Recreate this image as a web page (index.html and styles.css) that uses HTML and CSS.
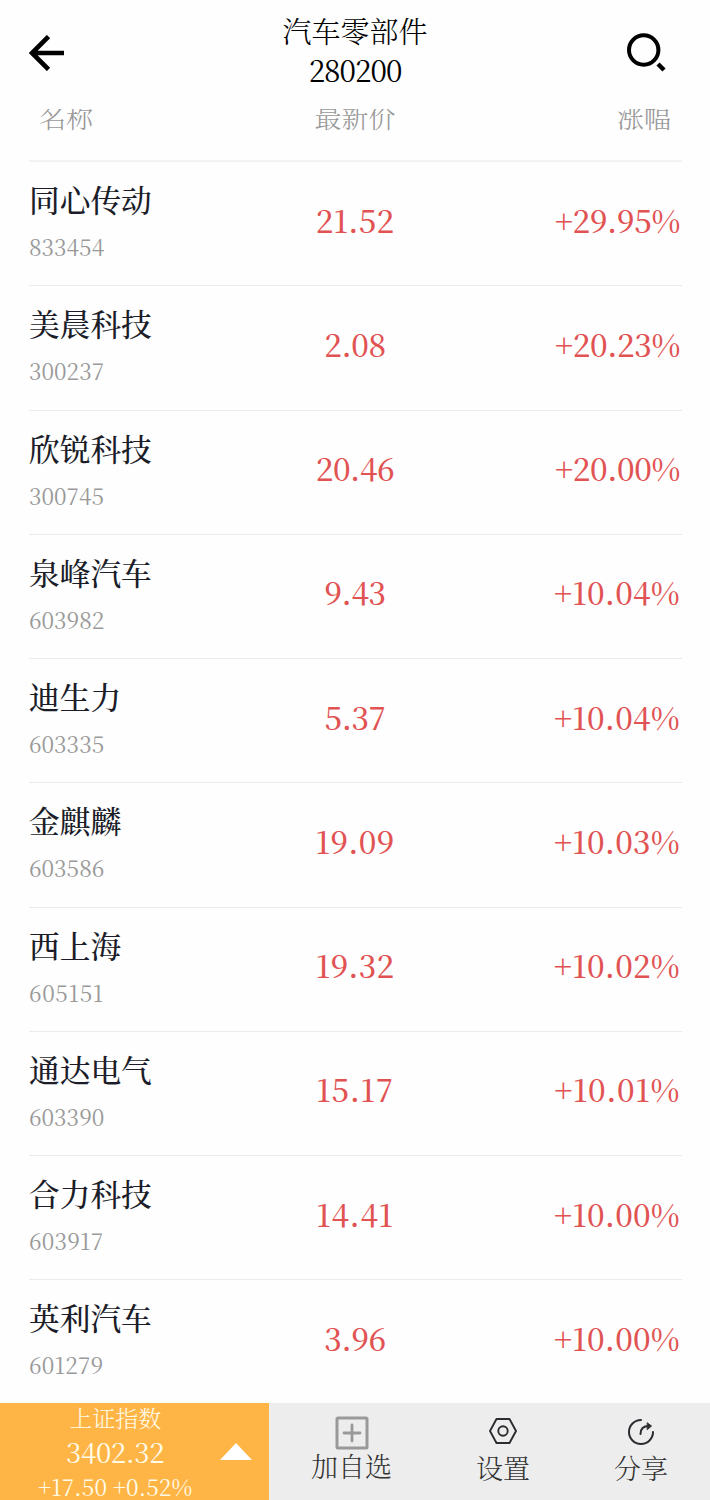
FILE: index.html
```html
<!DOCTYPE html>
<html lang="zh-CN">
<head>
    <meta charset="UTF-8">
    <meta name="viewport" content="width=device-width, initial-scale=1.0">
    <title>汽车零部件</title>
    <link rel="stylesheet" href="styles.css">
</head>
<body>
    <header class="header">
        <svg class="back" width="36" height="36" viewBox="0 0 36 36">
            <path d="M19.500 1.500L3 18l16.500 16.500M3 18h32" fill="none" stroke="#000" stroke-width="4.600"/>
        </svg>
        <div class="title">
            <h1>汽车零部件</h1>
            <p>280200</p>
        </div>
        <svg class="search" width="40" height="40" viewBox="0 0 40 40">
            <circle cx="17.700" cy="18" r="14.700" fill="none" stroke="#000" stroke-width="4"/>
            <path d="M32 32l6 6" stroke="#000" stroke-width="4.400"/>
        </svg>
    </header>

    <main>
        <div class="list-head">
            <span>名称</span>
            <span>最新价</span>
            <span>涨幅</span>
        </div>
        <ul class="list">
            <li><div class="name"><b>同心传动</b><small>833454</small></div><span class="price wide">21.52</span><span class="rate">+29.95%</span></li>
            <li><div class="name"><b>美晨科技</b><small>300237</small></div><span class="price">2.08</span><span class="rate">+20.23%</span></li>
            <li><div class="name"><b>欣锐科技</b><small>300745</small></div><span class="price">20.46</span><span class="rate">+20.00%</span></li>
            <li><div class="name"><b>泉峰汽车</b><small>603982</small></div><span class="price">9.43</span><span class="rate wide">+10.04%</span></li>
            <li><div class="name"><b>迪生力</b><small>603335</small></div><span class="price">5.37</span><span class="rate wide">+10.04%</span></li>
            <li><div class="name"><b>金麒麟</b><small>603586</small></div><span class="price wide">19.09</span><span class="rate wide">+10.03%</span></li>
            <li><div class="name"><b>西上海</b><small class="wider">605151</small></div><span class="price wide">19.32</span><span class="rate wide">+10.02%</span></li>
            <li><div class="name"><b>通达电气</b><small>603390</small></div><span class="price wider">15.17</span><span class="rate wider">+10.01%</span></li>
            <li><div class="name"><b>合力科技</b><small class="wide">603917</small></div><span class="price wider">14.41</span><span class="rate wide">+10.00%</span></li>
            <li><div class="name"><b>英利汽车</b><small class="wide">601279</small></div><span class="price">3.96</span><span class="rate wide">+10.00%</span></li>
        </ul>
    </main>

    <footer class="footer">
        <div class="index">
            <div class="index-text">
                <span class="index-name">上证指数</span>
                <span class="index-value">3402.32</span>
                <span class="index-change">+17.50 +0.52%</span>
            </div>
            <svg width="32" height="17" viewBox="0 0 32 17"><path d="M16 0l16 17H0z" fill="#fff"/></svg>
        </div>
        <div class="tab tab-add">
            <svg width="34" height="34" viewBox="0 0 34 34" fill="none" stroke="#999">
                <rect x="2" y="2" width="30" height="30" rx="1" stroke-width="3"/>
                <path d="M17 9v16M9 17h16" stroke-width="2.800" stroke-linecap="round"/>
            </svg>
            <span>加自选</span>
        </div>
        <div class="tab tab-set">
            <svg width="28" height="28" viewBox="0 0 28 28" fill="none" stroke="#2b2b30" stroke-width="1.900" stroke-linejoin="round">
                <path d="M7.500 2h13L27 14l-6.500 12h-13L1 14z"/>
                <circle cx="14" cy="14" r="4.700"/>
            </svg>
            <span>设置</span>
        </div>
        <div class="tab tab-share">
            <svg width="28" height="28" viewBox="0 0 28 28" fill="none" stroke="#2b2b30" stroke-width="2" stroke-linecap="round">
                <path d="M14 2A12 12 0 1 0 26 14"/>
                <path d="M13.500 16c0-5 3-8 8.500-8"/>
                <path d="M20.500 5l4 3-4 3.500z" fill="#2b2b30" stroke-width="1" stroke-linejoin="round"/>
            </svg>
            <span>分享</span>
        </div>
    </footer>
</body>
</html>
```
FILE: styles.css
```css
* {
    box-sizing: border-box;
    margin: 0;
    padding: 0;
}

body {
    height: 1500px;
    overflow: hidden;
    display: flex;
    flex-direction: column;
    background-color: #fefefe;
    color: #000;
    font-family: "Noto Serif CJK SC", "Liberation Serif", "Noto Sans CJK SC", serif;
    font-kerning: none;
}

/* Top bar */
.header {
    height: 109px;
    flex: none;
    display: grid;
    grid-template-columns: 40px 1fr 40px;
    align-items: start;
    padding: 11px 44px 0 29px;
}

.back {
    margin-top: 24px;
}

.search {
    margin-top: 21px;
}

.title {
    padding-left: 15px;
    text-align: center;
    line-height: 40px;
}

.title h1 {
    font-size: 29px;
    font-weight: 300;
}

.title p {
    margin-top: -2px;
    font-size: 29.500px;
    letter-spacing: -1px;
}

/* Column names, partly scrolled under the top bar */
.list-head {
    height: 53px;
    margin: 0 28px 0 29px;
    padding: 0 11px 0 10px;
    overflow: hidden;
    display: grid;
    grid-template-columns: 200px 1fr 200px;
    border-bottom: 2px solid #f3f3f3;
    color: #999;
    font-size: 27px;
    font-weight: 300;
    line-height: 40px;
}

.list-head span {
    margin-top: -12px;
}

.list-head span:nth-child(2) {
    text-align: center;
}

.list-head span:nth-child(3) {
    text-align: right;
}

/* Stock list */
main {
    flex: 1;
    min-height: 0;
    overflow: hidden;
}

.list {
    list-style: none;
    margin: 0 28px 0 29px;
}

.list li {
    height: 124.250px;
    display: grid;
    grid-template-columns: 200px 1fr 200px;
    align-items: center;
    padding: 0 2px 9px 0;
    border-bottom: 1px solid #ebebeb;
}

.list li:last-child {
    border-bottom-color: transparent;
}

.name {
    display: flex;
    flex-direction: column;
}

.name b {
    color: #1b1d29;
    font-size: 30.700px;
    font-weight: 500;
    line-height: 44px;
}

.name small {
    margin-top: 10px;
    color: #999;
    font-size: 22.500px;
    line-height: 30px;
}

.price,
.rate {
    color: #e15353;
    font-size: 31px;
    font-weight: 500;
    letter-spacing: -0.4px;
}

.price {
    padding-left: 1px;
    text-align: center;
}

.rate {
    text-align: right;
}

/* The digit 1 is narrow, so numbers with it get looser spacing */
.list .wide {
    letter-spacing: 0.2px;
}

.list .wider {
    letter-spacing: 0.6px;
}

/* Bottom bar */
.footer {
    height: 97px;
    flex: none;
    display: flex;
    background-color: #ededed;
}

.index {
    width: 269px;
    display: flex;
    justify-content: space-between;
    padding: 0 17px 0 38px;
    background-color: #ffb546;
    color: #fffbe6;
}

.index svg {
    margin-top: 40px;
}

.index-text {
    display: flex;
    flex-direction: column;
    align-items: center;
    white-space: nowrap;
}

.index-name {
    font-size: 23px;
    font-weight: 300;
    line-height: 29px;
}

.index-value {
    font-size: 27.500px;
    line-height: 38px;
    letter-spacing: -0.4px;
}

.index-change {
    font-size: 22.500px;
    line-height: 32px;
    letter-spacing: 0.1px;
}

.tab {
    display: flex;
    flex-direction: column;
    align-items: center;
    color: #333;
    font-size: 27px;
    font-weight: 300;
    line-height: 36px;
}

.tab-add {
    width: 165px;
    padding-top: 13px;
}

.tab-add span {
    margin-top: -2px;
}

.tab-set {
    width: 138px;
    padding-top: 14px;
}

.tab-share {
    width: 138px;
    padding-top: 15px;
}

.tab-set span {
    margin-top: 5px;
}

.tab-share span {
    margin-top: 4px;
}
```
